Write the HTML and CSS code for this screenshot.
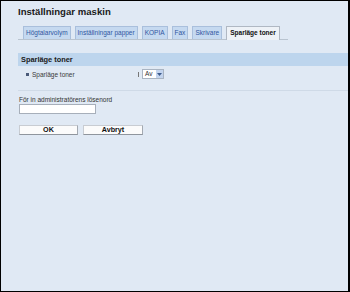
FILE: index.html
```html
<!DOCTYPE html>
<html lang="sv">
<head>
    <meta charset="UTF-8">
    <title>Inställningar maskin</title>
    <link rel="stylesheet" href="styles.css">
</head>
<body>
    <div class="frame">
        <div class="title">Inställningar maskin</div>
        <div class="tabs">
            <span class="tab">Högtalarvolym</span>
            <span class="tab">Inställningar papper</span>
            <span class="tab">KOPIA</span>
            <span class="tab">Fax</span>
            <span class="tab">Skrivare</span>
            <span class="tab active">Sparläge toner</span>
        </div>
        <div class="section">
            <div class="section-head">Sparläge toner</div>
            <div class="row">
                <span class="bullet"></span>
                <span class="label">Sparläge toner</span>
                <span class="tick"></span>
                <span class="select">
                    <span class="select-value">Av</span>
                    <span class="select-arrow">
                        <svg width="5" height="3" viewBox="0 0 5 3"><path d="M0 0h5L2.5 3z" fill="#3c5a8c"/></svg>
                    </span>
                </span>
            </div>
        </div>
        <div class="login">
            <div class="login-label">För in administratörens lösenord</div>
            <input type="password" class="login-input">
            <div class="buttons">
                <button class="btn">OK</button>
                <button class="btn">Avbryt</button>
            </div>
        </div>
    </div>
</body>
</html>
```

FILE: styles.css
```css
html, body {
    margin: 0;
    padding: 0;
}

body {
    font-family: 'Liberation Sans', Arial, sans-serif;
    background-color: #000;
}

.frame {
    box-sizing: border-box;
    width: 350px;
    height: 292px;
    border: 1px solid #000;
    border-right-width: 2px;
    background-color: #e0e9f4;
    padding: 5px 0 0 17px;
    color: #222;
}

.title {
    font-size: 9.6px;
    font-weight: 700;
    line-height: 11px;
    color: #1a1a1a;
}

.tabs {
    display: flex;
    gap: 4px;
    width: 270px;
    margin-top: 9px;
    padding-left: 5px;
    box-sizing: border-box;
    border-bottom: 1px solid #b9c4d0;
    height: 14px;
    align-items: flex-end;
}

.tab {
    box-sizing: border-box;
    height: 13px;
    line-height: 11px;
    padding: 0 2px;
    font-size: 6.5px;
    color: #3056a0;
    background-color: #c5d9f0;
    border: 1px solid #a9bfdc;
    border-bottom: none;
    white-space: nowrap;
}

.tab.active {
    height: 14px;
    margin-bottom: -1px;
    background-color: #eef2f7;
    border-color: #b0b8c3;
    color: #111;
    font-weight: 700;
    padding: 0 3px;
}

.section {
    margin-top: 13px;
}

.section-head {
    height: 13px;
    line-height: 13px;
    background-color: #bdd5ed;
    padding-left: 3px;
    font-size: 7.4px;
    font-weight: 700;
    color: #1a1a1a;
}

.row {
    display: flex;
    align-items: center;
    height: 12px;
    margin-top: 2px;
    padding-left: 8px;
    border-bottom: 1px solid #cfdae7;
    padding-bottom: 10px;
}

.bullet {
    width: 3px;
    height: 3px;
    background-color: #4a5a78;
    margin-right: 3px;
}

.label {
    font-size: 6.5px;
    color: #3a3a3a;
    width: 106px;
}

.tick {
    width: 1px;
    height: 5px;
    background-color: #777;
    margin-right: 3px;
}

.select {
    display: flex;
    box-sizing: border-box;
    width: 22px;
    height: 10px;
    border: 1px solid #a9b4c2;
    background-color: #fff;
}

.select-value {
    flex: 1;
    font-size: 6.5px;
    line-height: 8px;
    padding-left: 2px;
    color: #333;
}

.select-arrow {
    width: 7px;
    background-color: #c3d4ee;
    display: flex;
    align-items: center;
    justify-content: center;
}

.login {
    padding-top: 5px;
    padding-left: 1px;
}

.login-label {
    font-size: 6.5px;
    line-height: 7px;
    color: #333;
}

.login-input {
    display: block;
    box-sizing: border-box;
    width: 77px;
    height: 10px;
    margin: 0;
    margin-top: 1px;
    padding: 0;
    border: 1px solid #a7afba;
    background-color: #fff;
    outline: none;
}

.buttons {
    display: flex;
    gap: 5px;
    margin-top: 11px;
}

.btn {
    box-sizing: border-box;
    width: 59px;
    height: 10px;
    padding: 0;
    margin: 0;
    font-family: 'Liberation Sans', Arial, sans-serif;
    font-size: 7.2px;
    font-weight: 700;
    line-height: 8px;
    color: #111;
    background-color: #fbfbfb;
    border: 1px solid #c8ccd2;
    border-bottom-color: #8f959d;
    border-right-color: #a3a9b1;
}

.btn + .btn {
    width: 60px;
}
```
